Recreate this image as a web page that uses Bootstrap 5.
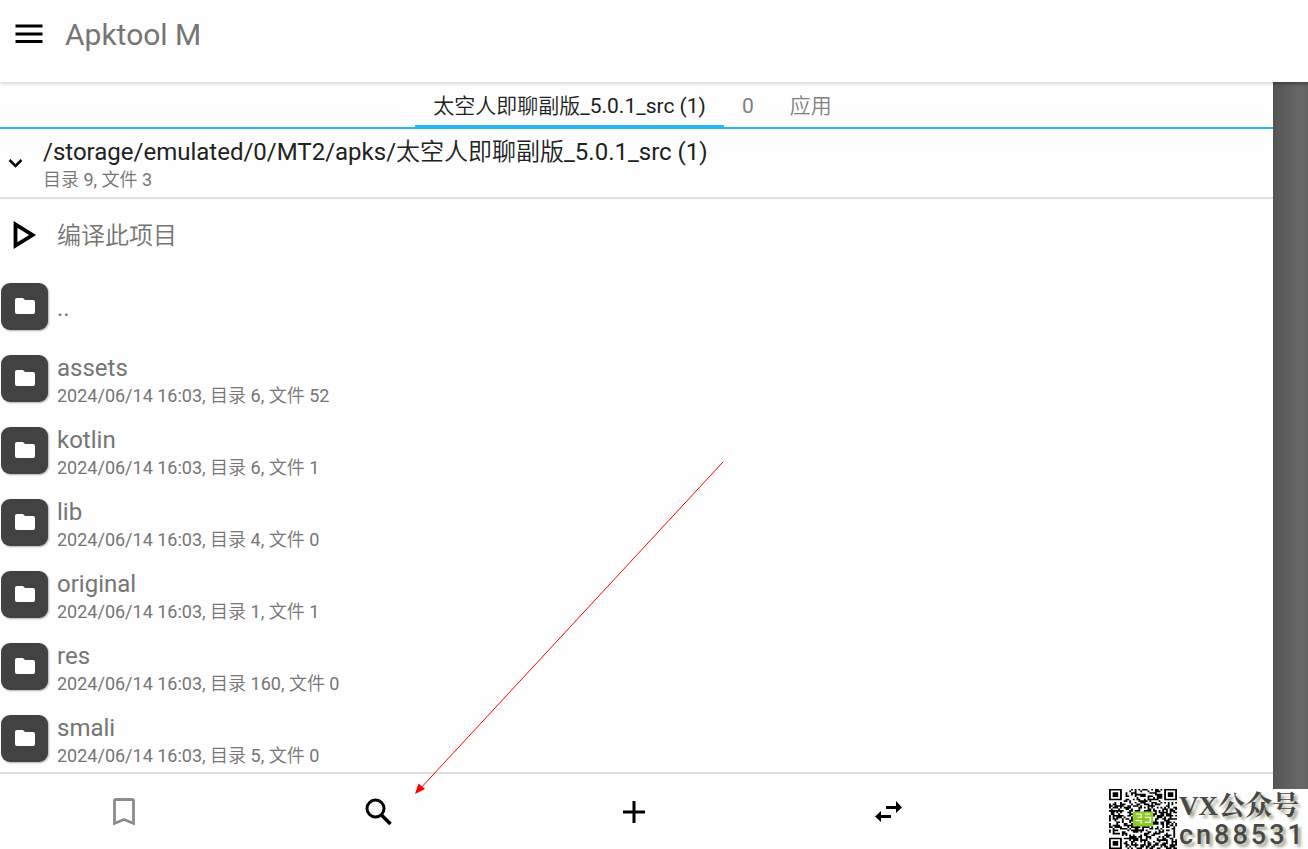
<!DOCTYPE html>
<html lang="zh-CN">
<head>
<meta charset="utf-8">
<meta name="viewport" content="width=device-width, initial-scale=1">
<title>Apktool M</title>
<link href="https://cdn.jsdelivr.net/npm/bootstrap@5.3.0/dist/css/bootstrap.min.css" rel="stylesheet">
<style>
body { font-family: Roboto, "Noto Sans CJK SC DemiLight", "Noto Sans CJK SC Light", "Noto Sans CJK SC", sans-serif; background: #fefefe; color: #757575; }
.ink { color: #212121; }
svg { display: block; }
.plain { border: 0; background: none; padding: 0; color: #000; }
.app-bar { height: 82px; padding: 0 14px 12px; gap: 21px; box-shadow: 0 1px 4px rgba(0,0,0,.22); z-index: 1; background: #fefefe; }
.app-title { font-size: 30px; line-height: 36px; font-weight: 400; margin: 0; }
.tab-strip { height: 47px; border-bottom: 2px solid #29b6f6; padding-right: 8px; }
.tab-strip a { font-size: 21px; line-height: 48px; height: 47px; padding: 0 18px; color: #808080; text-decoration: none; }
.tab-strip a.current { color: #212121; border-bottom: 4px solid #29b6f6; }
.path-bar { height: 70px; border-bottom: 2px solid #dedede; padding-left: 8px; gap: 20px; }
.path-text { padding-top: 6px; }
.line-main { font-size: 24px; line-height: 28px; }
.line-sub { font-size: 18px; line-height: 28px; }
.entry { height: 72px; flex: none; color: inherit; text-decoration: none; padding: 0 0 2px 1px; gap: 9px; }
.entry-text { padding-top: 7px; }
.tile { width: 47px; height: 47px; border-radius: 9px; background: #424242; box-shadow: 1px 1px 2px rgba(0,0,0,.3); }
.tool-bar { height: 77px; border-top: 2px solid #dedede; padding: 1px 2px 0 0; margin: 0 0 0 -4px; }
.side-shade { width: 35px; background: linear-gradient(90deg, #555, #666 70%); box-shadow: inset 0 3px 4px -2px rgba(0,0,0,.3); }
.contact { right: 0; bottom: 0; width: 199px; height: 60px; z-index: 2; background: #fefefe; }
.contact-text { color: #484848; text-shadow: 3px 3px 3px #a5a590; white-space: nowrap; padding: 2px 0 0 2px; }
.contact-name { font: 700 27px/30px "Liberation Serif", "Noto Serif CJK SC", "Noto Sans CJK SC", serif; }
.contact-id { font: 500 27px/28px Roboto, "Noto Sans", sans-serif; letter-spacing: 3px; }
.pointer { left: 414px; top: 461px; pointer-events: none; z-index: 2; }
</style>
<script src="https://cdn.jsdelivr.net/npm/bootstrap@5.3.0/dist/js/bootstrap.bundle.min.js"></script>
</head>
<body>
<div class="vh-100 d-flex flex-column position-relative overflow-hidden">
  <header class="app-bar d-flex align-items-center position-relative flex-shrink-0">
    <button class="plain" type="button" aria-label="菜单"><svg width="30" height="24"><path d="M1.500 3h27M1.500 11h27M1.500 18.500h27" stroke="#000" stroke-width="3"/></svg></button>
    <h1 class="app-title">Apktool M</h1>
  </header>
  <div class="d-flex flex-grow-1 overflow-hidden">
    <main class="d-flex flex-column flex-grow-1 overflow-hidden">
      <nav class="tab-strip d-flex justify-content-center flex-shrink-0">
        <a href="#" class="current">太空人即聊副版_5.0.1_src (1)</a><a href="#">0</a><a href="#">应用</a>
      </nav>
      <div class="path-bar d-flex align-items-center flex-shrink-0">
        <button class="plain" type="button" aria-label="展开"><svg width="15" height="10"><path d="M1.500 2l6 6 6-6" fill="none" stroke="#000" stroke-width="2.500"/></svg></button>
        <div class="path-text">
          <div class="line-main ink">/storage/emulated/0/MT2/apks/太空人即聊副版_5.0.1_src (1)</div>
          <div class="line-sub">目录 9, 文件 3</div>
        </div>
      </div>
      <div class="d-flex flex-column flex-grow-1 overflow-hidden" id="entries">
        <a href="#" class="entry d-flex align-items-center">
          <svg width="47" height="30"><path d="M14.500 5.500v21l17-10.500z" fill="none" stroke="#000" stroke-width="3.800"/></svg>
          <span class="line-main pt-1">编译此项目</span>
        </a>
      </div>
      <div class="tool-bar d-flex flex-shrink-0">
        <button class="plain col d-flex align-items-center justify-content-center" type="button" aria-label="书签"><svg width="22" height="28"><path d="M1.500 25.500V3q0-1.500 1.500-1.500h16q1.500 0 1.500 1.500v22.500L11 21.500z" fill="none" stroke="#8c8c8c" stroke-width="2.800"/></svg></button>
        <button class="plain col d-flex align-items-center justify-content-center" type="button" aria-label="搜索"><svg width="27" height="28" fill="none" stroke="#000"><circle cx="10.500" cy="10.500" r="8.500" stroke-width="3"/><path d="M16.500 17l9 9" stroke-width="3.600"/></svg></button>
        <button class="plain col d-flex align-items-center justify-content-center" type="button" aria-label="添加"><svg width="22" height="22"><path d="M11 0v22M0 11h22" stroke="#000" stroke-width="3"/></svg></button>
        <button class="plain col d-flex align-items-center justify-content-center" type="button" aria-label="交换"><svg width="27" height="22"><path d="M11 5h10V0l6 6.500-6 5.500V8H11zM16 14H6v-4l-6 5.500L6 21v-4h10z"/></svg></button>
        <div class="col"></div>
      </div>
    </main>
    <aside class="side-shade flex-shrink-0"></aside>
  </div>
  <svg class="pointer position-absolute" width="310" height="335"><path d="M309 1L5 329" stroke="#f00" fill="none"/><path d="M1 333l3.500-10.500 6.500 5.500z" fill="#f00"/></svg>
  <div class="contact position-absolute d-flex">
    <svg id="code" class="flex-shrink-0" width="68" height="60" viewBox="0 0 37 37" preserveAspectRatio="none">
      <path id="cells"/>
      <rect x="13" y="14" width="11" height="9" fill="#8bc926"/>
      <path d="M14.500 15.500h3v2h-2M14.500 19.500h3v2M19.500 15.500h3M19.500 17.500h3v3h-3" stroke="#eaf7ce" stroke-width=".8" fill="none"/>
    </svg>
    <div class="contact-text">
      <div class="contact-name">VX公众号</div>
      <div class="contact-id">cn88531</div>
    </div>
  </div>
</div>
<script>
const folders = [["..", ""], ["assets", "目录 6, 文件 52"], ["kotlin", "目录 6, 文件 1"], ["lib", "目录 4, 文件 0"],
  ["original", "目录 1, 文件 1"], ["res", "目录 160, 文件 0"], ["smali", "目录 5, 文件 0"]];
document.getElementById("entries").insertAdjacentHTML("beforeend", folders.map(([name, info]) => `
  <a href="#" class="entry d-flex align-items-center">
    <span class="tile d-flex align-items-center justify-content-center"><svg width="20" height="16" fill="#fff"><path d="M2 0h6l2 2h8q2 0 2 2v10q0 2-2 2H2q-2 0-2-2V2q0-2 2-2z"/></svg></span>
    <span class="${info ? "entry-text" : "pt-1"}"><span class="line-main d-block">${name}</span>${info ? `<span class="line-sub d-block">2024/06/14 16:03, ${info}</span>` : ""}</span>
  </a>`).join(""));

// code pattern: three corner finders, the rest from a fixed-seed generator
let seed = 77, d = "";
const finder = (x, y) => {
  for (const [a, b] of [[0, 0], [30, 0], [0, 30]]) {
    const u = x - a, v = y - b;
    if (u >= -1 && u <= 7 && v >= -1 && v <= 7) {
      const r = Math.max(Math.abs(u - 3), Math.abs(v - 3));
      return r === 3 || r < 2;
    }
  }
  return null;
};
for (let y = 0; y < 37; y++) for (let x = 0; x < 37; x++) {
  seed = (seed * 1103515245 + 12345) % 2147483648;
  const f = finder(x, y);
  if (f === null ? (seed >> 16) % 100 < 52 : f) d += `M${x} ${y}h1v1h-1z`;
}
document.getElementById("cells").setAttribute("d", d);
</script>
</body>
</html>
